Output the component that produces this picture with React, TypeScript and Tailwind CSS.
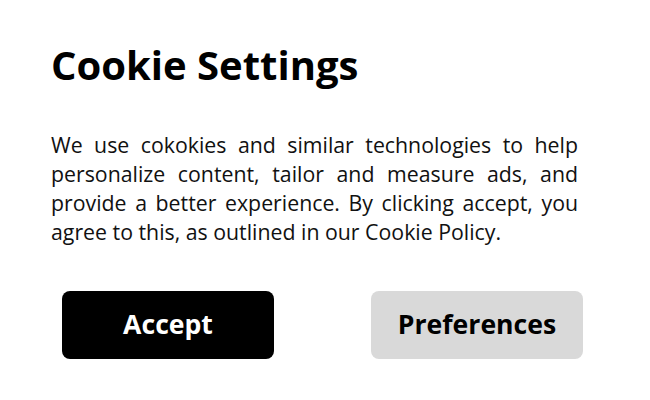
export default function App() {
  return (
    <div className="min-h-screen w-full bg-white font-['Open_Sans',sans-serif] text-black">
      <div className="w-[527px] ml-[51px] pt-[40px]">
        <h1 className="text-[40px] font-bold leading-[50px]">Cookie Settings</h1>
        <p className="mt-[40px] text-[21.3px] leading-[29px] text-justify text-[#111]">
          We use cokokies and similar technologies to help personalize content, tailor and measure ads, and
          provide a better experience. By clicking accept, you agree to this, as outlined in our Cookie Policy.
        </p>
      </div>
      <div className="ml-[62px] mt-[45px] flex gap-[97px]">
        <button className="w-[212px] h-[68px] rounded-[8px] bg-black text-white text-[26.6px] font-bold">
          Accept
        </button>
        <button className="w-[212px] h-[68px] rounded-[8px] bg-[#d9d9d9] text-black text-[26.6px] font-bold">
          Preferences
        </button>
      </div>
    </div>
  )
}
